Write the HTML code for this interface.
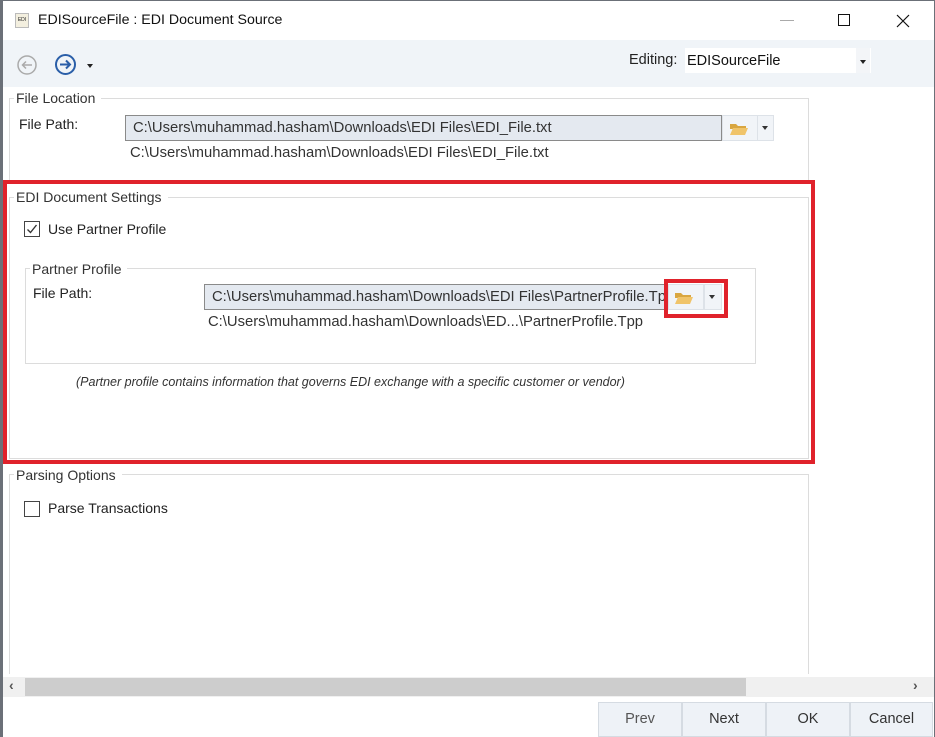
<!DOCTYPE html>
<html><head><style>
*{margin:0;padding:0;box-sizing:border-box}
body{width:935px;height:737px;background:#fff;font-family:"Liberation Sans",sans-serif;font-size:14px;color:#222;position:relative;overflow:hidden}
.a{position:absolute}
.grp{position:absolute;border:1px solid #dcdcdc}
.lg{position:absolute;background:#fff;padding:0 6px 0 2px;color:#333;font-size:14px}
.tb{position:absolute;background:#e4e9f0;border:1px solid #8a8a8a;height:26px;padding:4px 7px;white-space:nowrap;overflow:hidden;font-size:14.8px;color:#333}
.btn{position:absolute;background:#f1f4f8;border:1px solid #dde2e8;height:26px}
.cb{position:absolute;width:16px;height:16px;border:1px solid #444;background:#fff}
.bb{position:absolute;top:702px;height:35px;background:#eef2f7;border:1px solid #d5dbe2;text-align:center;line-height:33px;color:#333;font-size:14.5px}
.pt{font-size:14.8px}
</style></head><body>
<div class="a" style="left:0;top:0;width:935px;height:737px;border:1px solid #6b7078;border-left:3px solid #6b7078;border-bottom:0"></div>
<!-- title -->
<div class="a" style="left:15px;top:13px;width:14px;height:15px;background:#f3efdf;border:1px solid #bbb;font-size:5px;line-height:13px;text-align:center">EDI</div>
<div class="a" style="left:38px;top:12px;font-size:14.2px;color:#111">EDISourceFile : EDI Document Source</div>
<div class="a" style="left:780px;top:20px;width:14px;height:1px;background:#aaa"></div>
<div class="a" style="left:838px;top:14px;width:12px;height:12px;border:1px solid #111"></div>
<svg class="a" style="left:896px;top:14px" width="14" height="14"><path d="M1 1L13 13M13 1L1 13" stroke="#111" stroke-width="1.2"/></svg>
<!-- toolbar -->
<div class="a" style="left:3px;top:40px;width:931px;height:47px;background:#f0f4f8"></div>
<svg class="a" style="left:16px;top:54px" width="22" height="22"><circle cx="11" cy="11" r="9" fill="none" stroke="#aaa" stroke-width="1.5"/><path d="M16 11H7M10 7.5L6.5 11L10 14.5" fill="none" stroke="#aaa" stroke-width="1.5"/></svg>
<svg class="a" style="left:54px;top:53px" width="23" height="23"><circle cx="11.5" cy="11.5" r="9.5" fill="none" stroke="#2a5ea8" stroke-width="2"/><path d="M6 11.5H15M12 7.5L16 11.5L12 15.5" fill="none" stroke="#2a5ea8" stroke-width="2"/></svg>
<div class="a" style="left:87px;top:64px;border:3px solid transparent;border-top:4px solid #222"></div>
<div class="a" style="left:629px;top:52px;font-size:14.5px;color:#222">Editing:</div>
<div class="a" style="left:685px;top:48px;width:186px;height:25px;background:#fff"></div>
<div class="a" style="left:687px;top:53px;font-size:14.5px;color:#111">EDISourceFile</div>
<div class="a" style="left:856px;top:48px;width:14px;height:25px;background:#f3f5f8"></div>
<div class="a" style="left:860px;top:60px;border:3px solid transparent;border-top:4px solid #222"></div>
<!-- file location -->
<div class="grp" style="left:9px;top:98px;width:800px;height:82px;border-bottom:0"></div>
<div class="lg" style="left:14px;top:90px">File Location</div>
<div class="a" style="left:19px;top:116px">File Path:</div>
<div class="tb" style="left:125px;top:115px;width:597px">C:\Users\muhammad.hasham\Downloads\EDI Files\EDI_File.txt</div>
<div class="btn" style="left:722px;top:115px;width:36px"></div>
<svg class="a" style="left:729px;top:121px" width="20" height="15"><path d="M1 3h6l2 2h8v3H1z" fill="#d9a640"/><path d="M1 14L4 7h15l-3 7z" fill="#f0c46a"/></svg>
<div class="btn" style="left:757px;top:115px;width:17px"></div>
<div class="a" style="left:762px;top:126px;border:3px solid transparent;border-top:4px solid #333"></div>
<div class="a pt" style="left:130px;top:145px;color:#333">C:\Users\muhammad.hasham\Downloads\EDI Files\EDI_File.txt</div>
<!-- EDI document settings -->
<div class="grp" style="left:9px;top:197px;width:800px;height:262px"></div>
<div class="lg" style="left:14px;top:189px">EDI Document Settings</div>
<div class="cb" style="left:24px;top:221px"></div>
<svg class="a" style="left:26px;top:223px" width="12" height="12"><path d="M1.5 6.5L4.5 9.5L10.5 2" fill="none" stroke="#333" stroke-width="1.4"/></svg>
<div class="a" style="left:48px;top:221px;color:#222">Use Partner Profile</div>
<div class="grp" style="left:25px;top:268px;width:731px;height:96px"></div>
<div class="lg" style="left:30px;top:261px">Partner Profile</div>
<div class="a" style="left:33px;top:285px">File Path:</div>
<div class="tb" style="left:204px;top:284px;width:464px">C:\Users\muhammad.hasham\Downloads\EDI Files\PartnerProfile.Tpp</div>
<div class="btn" style="left:668px;top:284px;width:36px"></div>
<svg class="a" style="left:674px;top:290px" width="20" height="15"><path d="M1 3h6l2 2h8v3H1z" fill="#d9a640"/><path d="M1 14L4 7h15l-3 7z" fill="#f0c46a"/></svg>
<div class="btn" style="left:704px;top:284px;width:18px"></div>
<div class="a" style="left:709px;top:295px;border:3px solid transparent;border-top:4px solid #333"></div>
<div class="a" style="left:664px;top:279px;width:64px;height:39px;border:4px solid #e0222b"></div>
<div class="a pt" style="left:208px;top:314px;color:#333">C:\Users\muhammad.hasham\Downloads\ED...\PartnerProfile.Tpp</div>
<div class="a" style="left:76px;top:375px;font-size:12.5px;font-style:italic;color:#333">(Partner profile contains information that governs EDI exchange with a specific customer or vendor)</div>
<div class="a" style="left:3px;top:180px;width:812px;height:284px;border:4px solid #e0222b"></div>
<!-- parsing -->
<div class="grp" style="left:9px;top:474px;width:800px;height:200px;border-bottom:0"></div>
<div class="lg" style="left:14px;top:467px">Parsing Options</div>
<div class="cb" style="left:24px;top:501px"></div>
<div class="a" style="left:48px;top:500px;color:#222">Parse Transactions</div>
<!-- scrollbar -->
<div class="a" style="left:3px;top:677px;width:931px;height:20px;background:#f0f0f0"></div>
<div class="a" style="left:25px;top:678px;width:721px;height:18px;background:#cdcdcd"></div>
<div class="a" style="left:9px;top:677px;font-size:14px;font-weight:bold;color:#555">‹</div>
<div class="a" style="left:913px;top:677px;font-size:14px;font-weight:bold;color:#555">›</div>
<!-- buttons -->
<div class="bb" style="left:598px;width:84px;color:#555">Prev</div>
<div class="bb" style="left:682px;width:84px">Next</div>
<div class="bb" style="left:766px;width:84px">OK</div>
<div class="bb" style="left:850px;width:83px">Cancel</div>
</body></html>
